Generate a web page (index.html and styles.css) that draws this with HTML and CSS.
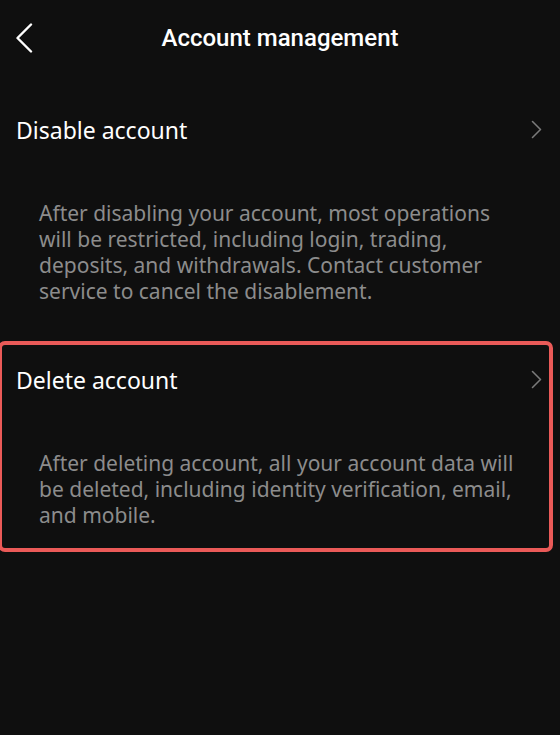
FILE: index.html
```html
<!DOCTYPE html>
<html lang="en">
<head>
<meta charset="utf-8">
<title>Account management</title>
<link rel="stylesheet" href="styles.css">
</head>
<body>
<div class="page">
  <header class="topbar">
    <svg class="back" width="18" height="30" viewBox="0 0 18 30" aria-hidden="true">
      <path d="M16 1.5 L2.5 15 L16 28.5" fill="none" stroke="#ffffff" stroke-width="2.4" stroke-linecap="round" stroke-linejoin="round"/>
    </svg>
    <h1 class="title">Account management</h1>
  </header>

  <section class="item">
    <div class="row">
      <span class="row-label">Disable account</span>
      <svg class="chev" width="11" height="19" viewBox="0 0 11 19" aria-hidden="true">
        <path d="M1.5 1.5 L9.5 9.5 L1.5 17.5" fill="none" stroke="#7a7a7a" stroke-width="1.6" stroke-linecap="round" stroke-linejoin="round"/>
      </svg>
    </div>
    <p class="desc">After disabling your account, most operations will be restricted, including login, trading, deposits, and withdrawals. Contact customer service to cancel the disablement.</p>
  </section>

  <section class="item item-selected">
    <div class="row">
      <span class="row-label">Delete account</span>
      <svg class="chev" width="11" height="19" viewBox="0 0 11 19" aria-hidden="true">
        <path d="M1.5 1.5 L9.5 9.5 L1.5 17.5" fill="none" stroke="#7a7a7a" stroke-width="1.6" stroke-linecap="round" stroke-linejoin="round"/>
      </svg>
    </div>
    <p class="desc">After deleting account, all your account data will be deleted, including identity verification, email, and mobile.</p>
  </section>
</div>
</body>
</html>
```

FILE: styles.css
```css
html, body {
  margin: 0;
  padding: 0;
  background: #0f0f0f;
}

body {
  font-family: "Noto Sans", "Open Sans", sans-serif;
  color: #ffffff;
  width: 560px;
  height: 735px;
  overflow: hidden;
}

.page {
  display: flex;
  flex-direction: column;
  gap: 13px;
}

.topbar {
  position: relative;
  height: 78px;
  box-sizing: border-box;
  padding-bottom: 2px;
  display: flex;
  align-items: center;
  justify-content: center;
}

.back {
  position: absolute;
  left: 15px;
  top: 23px;
}

.title {
  margin: 0;
  font-family: Roboto, "Noto Sans", sans-serif;
  font-size: 24px;
  font-weight: 500;
  color: #ffffff;
}

.item {
  border: 4px solid transparent;
  margin-left: -2px;
  width: 555px;
  box-sizing: border-box;
  padding-bottom: 20px;
}

.item-selected {
  border-color: #ea5a58;
  border-radius: 7px;
}

.row {
  height: 69px;
  display: flex;
  align-items: center;
  justify-content: space-between;
  padding-left: 14px;
  padding-right: 7px;
}

.row-label {
  font-size: 23px;
  color: #ffffff;
}

.chev {
  display: block;
}

.desc {
  margin: 0;
  width: 475px;
  padding: 36px 0 0 37px;
  font-size: 21px;
  line-height: 26px;
  color: #8c8c8c;
}
```
